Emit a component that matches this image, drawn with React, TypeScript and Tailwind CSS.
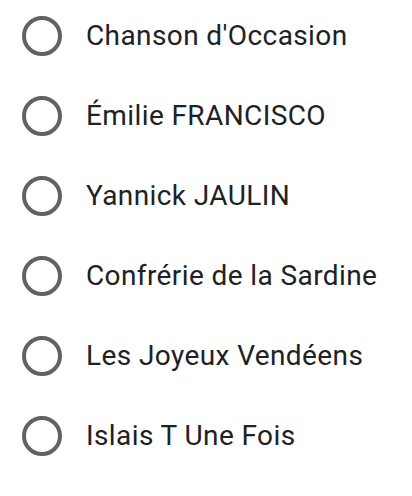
const OPTIONS = [
  "Chanson d'Occasion",
  "Émilie FRANCISCO",
  "Yannick JAULIN",
  "Confrérie de la Sardine",
  "Les Joyeux Vendéens",
  "Islais T Une Fois",
];

export default function App() {
  return (
    <div className="min-h-[496px] w-[412px] bg-white pt-4 pl-[22px] font-['Roboto',sans-serif]">
      <div className="flex flex-col gap-10">
        {OPTIONS.map((label) => (
          <label key={label} className="flex h-10 items-center gap-6">
            <span className="h-10 w-10 shrink-0 rounded-full border-4 border-[#5f6368]" />
            <span className="text-[28px] leading-none tracking-[0.4px] text-[#202124]">{label}</span>
          </label>
        ))}
      </div>
    </div>
  );
}
